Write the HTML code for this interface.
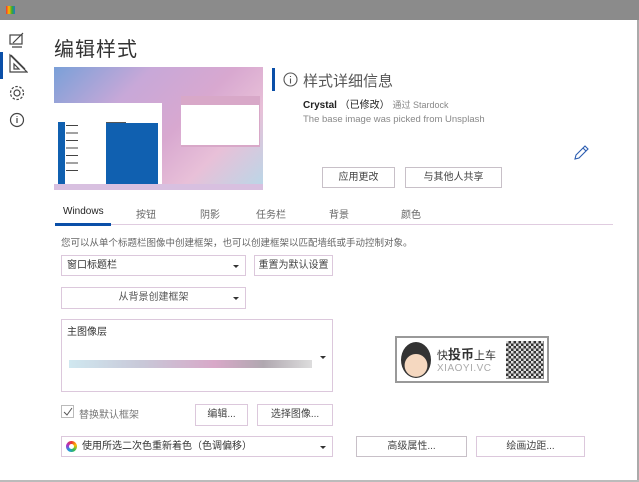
<!DOCTYPE html>
<html><head><meta charset="utf-8"><style>
*{margin:0;padding:0;box-sizing:border-box}
body{width:639px;height:482px;overflow:hidden;background:#fff;font-family:"Liberation Sans","Noto Sans CJK SC",sans-serif;position:relative;color:#333}
.a{position:absolute}
.t{font-size:10px;white-space:nowrap}
.btn{position:absolute;border:1px solid #c8c0c8;background:#fff;font-size:10px;color:#444;text-align:center;white-space:nowrap}
.dd{position:absolute;border:1px solid #dcc8dc;background:#fff;font-size:10px;color:#333;white-space:nowrap}
.arr{position:absolute;right:6px;top:50%;margin-top:-1px;border-left:3px solid transparent;border-right:3px solid transparent;border-top:3px solid #333}
</style></head><body>
<div class="a" style="left:0;top:0;width:639px;height:20px;background:#8b8b8b"></div>
<div class="a" style="left:6px;top:6px;width:9px;height:8px;background:linear-gradient(90deg,#e33,#fb0,#3a3,#27c)"></div>
<div class="a" style="left:637px;top:20px;width:2px;height:462px;background:#aaa"></div>
<div class="a" style="left:0;top:480px;width:639px;height:2px;background:#bbb"></div>
<!-- sidebar -->
<svg class="a" style="left:8px;top:31px" width="20" height="100" viewBox="0 0 20 100" fill="none" stroke="#444" stroke-width="1.2">
<rect x="2" y="4" width="12" height="9"/><path d="M5 12 L15 2 M4 16h10"/>
<path d="M2 24v17h17z M6 33v5h5z M3 24l14 14"/>
<circle cx="9" cy="62" r="3"/><circle cx="9" cy="62" r="6.5" stroke-dasharray="2.5 1.6"/>
<circle cx="9" cy="89" r="6.5"/><path d="M9 87v5M9 85v0.8"/>
</svg>
<div class="a" style="left:0;top:52px;width:3px;height:27px;background:#0a4fa8"></div>
<div class="a" style="left:54px;top:33px;font-size:20px;color:#333;letter-spacing:1px">编辑样式</div>
<!-- preview -->
<div class="a" style="left:54px;top:67px;width:209px;height:123px;background:linear-gradient(135deg,#7aa0d8,#c8a8d8 30%,#d8a8d0 55%,#e8c0d8 75%,#b8d8e8);overflow:hidden">
<div class="a" style="left:0;top:36px;width:108px;height:81px;background:#fff"></div>
<div class="a" style="left:4px;top:55px;width:7px;height:63px;background:#1060b0"></div>
<div class="a" style="left:12px;top:58px;width:12px;height:50px;background:repeating-linear-gradient(#444 0 1px,transparent 1px 7.5px)"></div>
<div class="a" style="left:52px;top:56px;width:52px;height:62px;background:#1060b0"></div>
<div class="a" style="left:52px;top:55px;width:20px;height:1px;background:#555"></div>
<div class="a" style="left:127px;top:29px;width:79px;height:51px;background:#d8a8c8"></div>
<div class="a" style="left:127px;top:38px;width:78px;height:40px;background:#fff"></div>
<div class="a" style="left:0;top:117px;width:209px;height:6px;background:#d8c0e0"></div>
</div>
<!-- info -->
<div class="a" style="left:272px;top:68px;width:3px;height:23px;background:#0a4fa8"></div>
<svg class="a" style="left:283px;top:72px" width="15" height="15" fill="none" stroke="#555" stroke-width="1.1"><circle cx="7.5" cy="7.5" r="6.5"/><path d="M7.5 6.5v5M7.5 4v1"/></svg>
<div class="a" style="left:303px;top:70px;font-size:15px;color:#555">样式详细信息</div>
<div class="a t" style="left:303px;top:96px;color:#222"><b>Crystal</b> （已修改） <span style="color:#888;font-size:9px">通过 Stardock</span></div>
<div class="a t" style="left:303px;top:114px;color:#888;font-size:9.5px">The base image was picked from Unsplash</div>
<svg class="a" style="left:573px;top:145px" width="16" height="16" fill="none" stroke="#2a5cb0" stroke-width="1.1"><path d="M2 14l1-4 9-9 3 3-9 9z M10 3l3 3"/></svg>
<div class="btn" style="left:322px;top:167px;width:73px;height:21px;line-height:19px">应用更改</div>
<div class="btn" style="left:405px;top:167px;width:97px;height:21px;line-height:19px">与其他人共享</div>
<!-- tabs -->
<div class="a t" style="left:63px;top:206px;color:#222">Windows</div>
<div class="a t" style="left:136px;top:206px;color:#666">按钮</div>
<div class="a t" style="left:200px;top:206px;color:#666">阴影</div>
<div class="a t" style="left:256px;top:206px;color:#666">任务栏</div>
<div class="a t" style="left:329px;top:206px;color:#666">背景</div>
<div class="a t" style="left:401px;top:206px;color:#666">颜色</div>
<div class="a" style="left:55px;top:224px;width:558px;height:1px;background:#e0cce0"></div>
<div class="a" style="left:55px;top:223px;width:56px;height:3px;background:#0a4fa8"></div>
<div class="a t" style="left:61px;top:235px;color:#666;font-size:9.5px">您可以从单个标题栏图像中创建框架，也可以创建框架以匹配墙纸或手动控制对象。</div>
<div class="dd" style="left:61px;top:255px;width:185px;height:21px;line-height:19px;padding-left:5px">窗口标题栏<i class="arr"></i></div>
<div class="btn" style="left:254px;top:255px;width:79px;height:21px;line-height:19px;border-color:#dcc8dc">重置为默认设置</div>
<div class="dd" style="left:61px;top:287px;width:185px;height:22px;line-height:20px;text-align:center;color:#555">从背景创建框架<i class="arr"></i></div>
<div class="dd" style="left:61px;top:319px;width:272px;height:73px;padding:3px 5px">主图像层<i class="arr" style="margin-top:0"></i>
<div class="a" style="left:7px;top:40px;width:243px;height:8px;background:linear-gradient(90deg,#d0e8f0,#c8c8d8 30%,#d8a8c8 60%,#b0a8b0 80%,#ddd)"></div></div>
<!-- watermark -->
<div class="a" style="left:395px;top:336px;width:154px;height:47px;border:2px solid #999;background:#fff">
<div class="a" style="left:4px;top:4px;width:30px;height:36px;border-radius:50%;background:radial-gradient(circle at 50% 65%,#f5d8c0 40%,#333 42%)"></div>
<div class="a" style="left:40px;top:6px;font-size:11px;color:#333">快<b style="font-size:13px">投币</b>上车</div>
<div class="a" style="left:40px;top:25px;font-size:10px;color:#aaa;letter-spacing:0.5px">XIAOYI.VC</div>
<div class="a" style="left:109px;top:3px;width:38px;height:38px;background:repeating-conic-gradient(#333 0 25%,#ddd 0 50%) 0 0/5px 5px"></div>
</div>
<!-- checkbox row -->
<div class="a" style="left:61px;top:405px;width:13px;height:13px;border:1px solid #bbb"></div>
<svg class="a" style="left:62px;top:406px" width="11" height="11" fill="none" stroke="#555"><path d="M2 6l3 3 5-7"/></svg>
<div class="a t" style="left:79px;top:406px;color:#777">替换默认框架</div>
<div class="btn" style="left:195px;top:404px;width:53px;height:22px;line-height:20px;border-color:#dcc8dc">编辑...</div>
<div class="btn" style="left:257px;top:404px;width:76px;height:22px;line-height:20px;border-color:#dcc8dc">选择图像...</div>
<div class="dd" style="left:61px;top:436px;width:272px;height:21px;line-height:19px;padding-left:20px">使用所选二次色重新着色（色调偏移）<i class="arr"></i></div>
<div class="a" style="left:66px;top:441px;width:11px;height:11px;border-radius:50%;background:conic-gradient(#e33,#fb0,#3b5,#29d,#a3c,#e33)"></div>
<div class="a" style="left:69px;top:444px;width:5px;height:5px;border-radius:50%;background:#fff"></div>
<div class="btn" style="left:356px;top:436px;width:111px;height:21px;line-height:19px">高级属性...</div>
<div class="btn" style="left:476px;top:436px;width:109px;height:21px;line-height:19px;border-color:#dcc8dc">绘画边距...</div>
</body></html>
